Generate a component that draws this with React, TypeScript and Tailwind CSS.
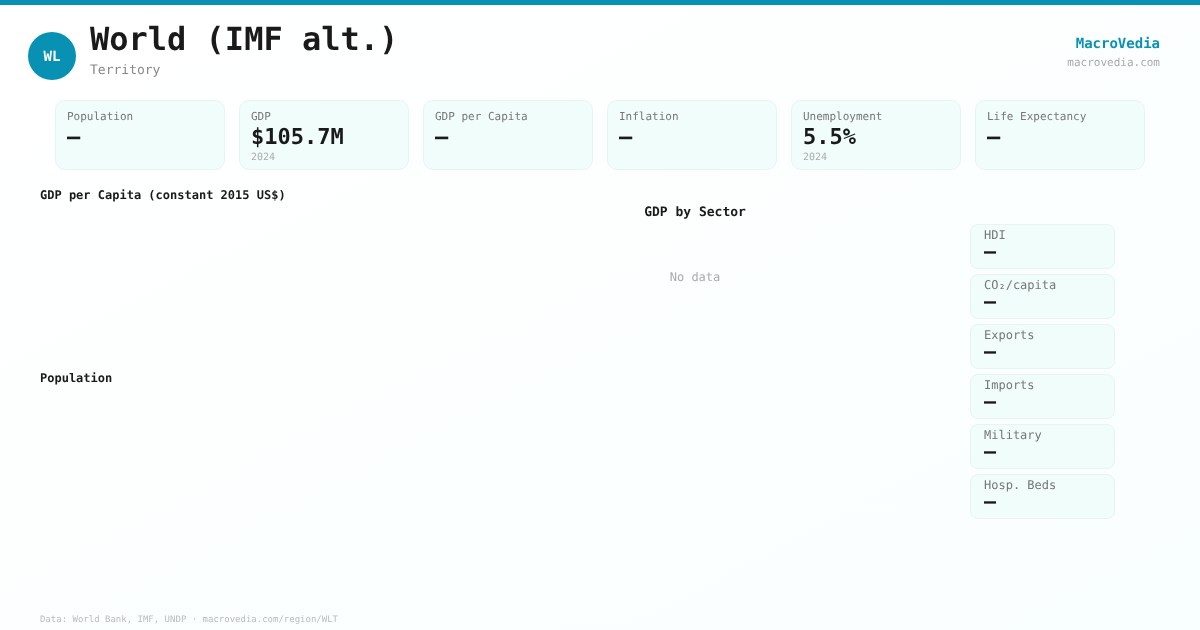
import React from 'react';

const mono = 'font-["DejaVu_Sans_Mono",monospace]';

const stats = [
  { label: 'Population', value: '—' },
  { label: 'GDP', value: '$105.7M', year: '2024' },
  { label: 'GDP per Capita', value: '—' },
  { label: 'Inflation', value: '—' },
  { label: 'Unemployment', value: '5.5%', year: '2024' },
  { label: 'Life Expectancy', value: '—' },
];

const sideStats = ['HDI', 'CO₂/capita', 'Exports', 'Imports', 'Military', 'Hosp. Beds'];

function StatCard({ label, value, year }: { label: string; value: string; year?: string }) {
  return (
    <div className="w-[170px] h-[70px] rounded-[10px] border border-[#e9f3f3] bg-[#f0fdfb] px-[11px] pt-[9px]">
      <div className="text-[11px] leading-[13px] text-[#777777]">{label}</div>
      <div className="text-[22px] leading-[26px] mt-[2px] font-bold text-[#1a1a1a]">{value}</div>
      {year && <div className="text-[10px] leading-[12px] mt-[1px] text-[#aaaaaa]">{year}</div>}
    </div>
  );
}

function SideCard({ label }: { label: string }) {
  return (
    <div className="h-[45px] rounded-lg border border-[#e9f3f3] bg-[#f0fdfb] px-[13px] pt-[3px]">
      <div className="text-[12px] leading-[14px] text-[#777777]">{label}</div>
      <div className="text-[20px] leading-[12px] mt-[3px] font-bold text-[#1a1a1a]">—</div>
    </div>
  );
}

export default function App() {
  return (
    <div className={`${mono} antialiased [text-rendering:geometricPrecision] will-change-transform w-[1200px] h-[630px] overflow-hidden flex flex-col bg-linear-to-br from-white to-[#f9fefe] border-t-[5px] border-[#0891b2]`}>
      <header className="h-[95px] flex justify-between pl-[28px] pr-10">
        <div className="flex gap-[14px]">
          <div className="mt-[27px] w-12 h-12 rounded-full bg-[#0891b2] flex items-center justify-center pt-[2px] text-[14px] font-bold text-white">
            WL
          </div>
          <div className="pt-[15px]">
            <div className="text-[32px] leading-[38px] font-bold text-[#1a1a1a]">World (IMF alt.)</div>
            <div className="text-[13px] leading-[16px] mt-[5px] text-[#888888]">Territory</div>
          </div>
        </div>
        <div className="pt-[30px] text-right">
          <div className="text-[14px] leading-[18px] font-bold text-[#0891b2]">MacroVedia</div>
          <div className="text-[11px] leading-[14px] mt-[3px] text-[#aaaaaa]">macrovedia.com</div>
        </div>
      </header>

      <div className="flex justify-center gap-[14px]">
        {stats.map(s => (
          <StatCard key={s.label} {...s} />
        ))}
      </div>

      <div className="flex-1 flex pl-10 relative">
        <div className="w-[430px] pt-[18px]">
          <div className="text-[12px] leading-[14px] font-bold text-[#1a1a1a]">GDP per Capita (constant 2015 US$)</div>
          <div className="mt-[169px] text-[12px] leading-[14px] font-bold text-[#1a1a1a]">Population</div>
        </div>
        <div className="w-[450px] pt-[35px] text-center">
          <div className="text-[13px] leading-[16px] font-bold text-[#1a1a1a]">GDP by Sector</div>
          <div className="mt-[48px] text-[12px] leading-[16px] text-[#aaaaaa]">No data</div>
        </div>
        <div className="ml-[50px] w-[145px] pt-[54px] flex flex-col gap-[5px]">
          {sideStats.map(label => (
            <SideCard key={label} label={label} />
          ))}
        </div>
      </div>

      <footer className="pl-10 pb-[4px] text-[9px] leading-[12px] text-[#bbbbbb]">
        Data: World Bank, IMF, UNDP · macrovedia.com/region/WLT
      </footer>
    </div>
  );
}
